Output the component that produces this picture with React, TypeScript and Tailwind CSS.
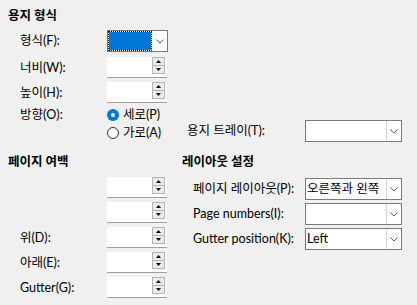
import React from "react";

const Chevron = () => (
  <svg width="8" height="5" viewBox="0 0 8 5">
    <polyline points="0.5,0.5 4,4 7.5,0.5" fill="none" stroke="#606060" strokeWidth="1" />
  </svg>
);

const Arrow = ({ up }: { up?: boolean }) => (
  <svg width="5" height="3" viewBox="0 0 5 3">
    <polygon points={up ? "0,3 5,3 2.5,0" : "0,0 5,0 2.5,3"} fill="#000" />
  </svg>
);

function Spin() {
  return (
    <div className="flex h-[21px] w-[60px] bg-white border-b border-[#a0a0a0]">
      <div className="flex-1" />
      <div className="mr-[2px] flex w-[13px] flex-col">
        <div className="flex h-[9px] items-center justify-center border border-[#b4b4b4] bg-[#ececec]">
          <Arrow up />
        </div>
        <div className="-mt-px flex h-[9px] items-center justify-center border border-[#b4b4b4] bg-[#ececec]">
          <Arrow />
        </div>
      </div>
    </div>
  );
}

function Combo({ value, width }: { value?: string; width: string }) {
  return (
    <div className={`flex h-[22px] ${width} border border-[#7a7a7a] bg-white`}>
      <div className="flex-1 overflow-hidden whitespace-nowrap pl-[1px] leading-[20px]">{value}</div>
      <div className="flex w-[15px] items-center justify-center border-l border-[#d4d4d4]">
        <Chevron />
      </div>
    </div>
  );
}

function Radio({ checked, label }: { checked?: boolean; label: string }) {
  return (
    <div className="flex h-[18px] items-center gap-[4px]">
      {checked ? (
        <div className="flex h-[12px] w-[12px] items-center justify-center rounded-full bg-[#0078d7]">
          <div className="h-[4px] w-[4px] rounded-full bg-white" />
        </div>
      ) : (
        <div className="h-[12px] w-[12px] rounded-full border border-[#333] bg-white" />
      )}
      <span>{label}</span>
    </div>
  );
}

const labels = ["", "", "위(D):", "아래(E):", "Gutter(G):"];

export default function App() {
  return (
    <div className="h-[305px] w-[417px] bg-[#f0f0f0] pl-[8px] pt-[8px] text-[12.5px] leading-[16px] text-black font-['Lato','Noto_Sans_CJK_KR',sans-serif]">
      {/* 용지 형식 */}
      <div className="w-[394px]">
        <div className="h-[16px] font-bold">용지 형식</div>
        <div className="mt-[6px] flex items-center">
          <div className="w-[99px] pl-[12px]">형식(F):</div>
          <div className="flex h-[22px] w-[61px] border border-[#7a7a7a] bg-white">
            <div className="flex-1 border border-dotted border-black bg-[#0078d7] bg-clip-padding" />
            <div className="flex w-[15px] items-center justify-center">
              <Chevron />
            </div>
          </div>
        </div>
        <div className="mt-[5px] flex items-center">
          <div className="w-[99px] pl-[12px]">너비(W):</div>
          <Spin />
        </div>
        <div className="mt-[4px] flex items-center">
          <div className="w-[99px] pl-[12px]">높이(H):</div>
          <Spin />
        </div>
        <div className="mt-[3px] flex">
          <div className="w-[99px] pl-[12px] leading-[18px]">방향(O):</div>
          <div className="flex w-[80px] flex-col">
            <Radio checked label="세로(P)" />
            <Radio label="가로(A)" />
          </div>
          <div className="flex flex-1 items-center self-end">
            <span className="flex-1">용지 트레이(T):</span>
            <Combo width="w-[97px]" />
          </div>
        </div>
      </div>

      {/* 하단 */}
      <div className="mt-[12px] flex">
        <div className="w-[174px]">
          <div className="h-[16px] font-bold">페이지 여백</div>
          <div className="mt-[7px] flex flex-col gap-[4px]">
            {labels.map((l, i) => (
              <div key={i} className="flex items-center">
                <div className="w-[99px] pl-[12px]">{l}</div>
                <Spin />
              </div>
            ))}
          </div>
        </div>
        <div className="w-[220px]">
          <div className="h-[16px] font-bold">레이아웃 설정</div>
          <div className="mt-[8px] flex flex-col gap-[3px]">
            <div className="flex items-center">
              <span className="flex-1 pl-[11px]">페이지 레이아웃(P):</span>
              <Combo width="w-[97px]" value="오른쪽과 왼쪽" />
            </div>
            <div className="flex items-center">
              <span className="flex-1 pl-[11px]">Page numbers(I):</span>
              <Combo width="w-[97px]" />
            </div>
            <div className="flex items-center">
              <span className="flex-1 pl-[11px]">Gutter position(K):</span>
              <Combo width="w-[97px]" value="Left" />
            </div>
          </div>
        </div>
      </div>
    </div>
  );
}
